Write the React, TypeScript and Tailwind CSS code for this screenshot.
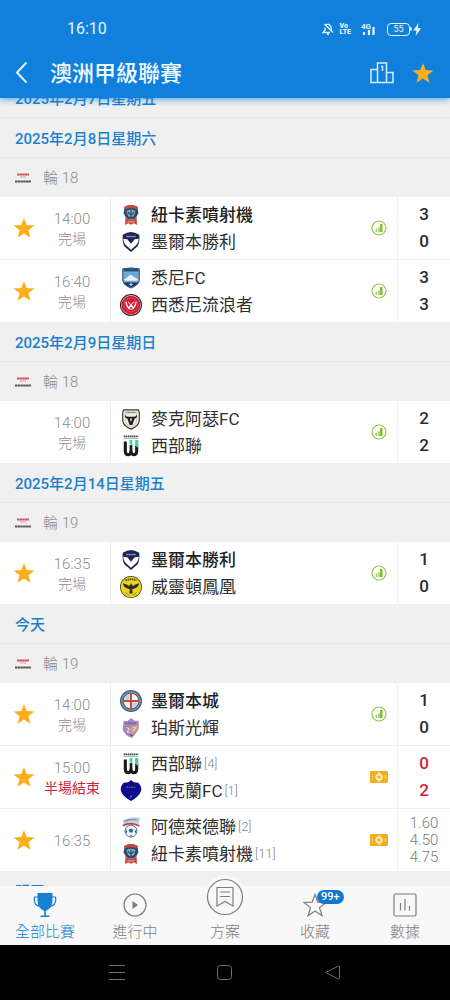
import { useState } from "react";
import type { ReactNode } from "react";

type Crest =
  | "jets" | "victory" | "sydney" | "wanderers" | "macarthur" | "western"
  | "phoenix" | "city" | "glory" | "auckland" | "adelaide";

interface Team {
  name: string;
  crest: Crest;
  rank?: number;
  winner?: boolean;
}

interface Match {
  id: number;
  time: string;
  status?: string;
  live?: boolean;
  starred?: boolean;
  teams: [Team, Team];
  scores?: [number, number];
  odds?: string[];
}

interface Day {
  date: string;
  round: string;
  matches: Match[];
}

const DAYS: Day[] = [
  {
    date: "2025年2月8日星期六",
    round: "輪 18",
    matches: [
      { id: 1, time: "14:00", status: "完場", starred: true, scores: [3, 0],
        teams: [{ name: "紐卡素噴射機", crest: "jets", winner: true }, { name: "墨爾本勝利", crest: "victory" }] },
      { id: 2, time: "16:40", status: "完場", starred: true, scores: [3, 3],
        teams: [{ name: "悉尼FC", crest: "sydney" }, { name: "西悉尼流浪者", crest: "wanderers" }] },
    ],
  },
  {
    date: "2025年2月9日星期日",
    round: "輪 18",
    matches: [
      { id: 3, time: "14:00", status: "完場", scores: [2, 2],
        teams: [{ name: "麥克阿瑟FC", crest: "macarthur" }, { name: "西部聯", crest: "western" }] },
    ],
  },
  {
    date: "2025年2月14日星期五",
    round: "輪 19",
    matches: [
      { id: 4, time: "16:35", status: "完場", starred: true, scores: [1, 0],
        teams: [{ name: "墨爾本勝利", crest: "victory", winner: true }, { name: "威靈頓鳳凰", crest: "phoenix" }] },
    ],
  },
  {
    date: "今天",
    round: "輪 19",
    matches: [
      { id: 5, time: "14:00", status: "完場", starred: true, scores: [1, 0],
        teams: [{ name: "墨爾本城", crest: "city", winner: true }, { name: "珀斯光輝", crest: "glory" }] },
      { id: 6, time: "15:00", status: "半場結束", live: true, starred: true, scores: [0, 2],
        teams: [{ name: "西部聯", crest: "western", rank: 4 }, { name: "奧克蘭FC", crest: "auckland", rank: 1 }] },
      { id: 7, time: "16:35", starred: true, odds: ["1.60", "4.50", "4.75"],
        teams: [{ name: "阿德萊德聯", crest: "adelaide", rank: 2 }, { name: "紐卡素噴射機", crest: "jets", rank: 11 }] },
    ],
  },
];

const CRESTS: Record<Crest, ReactNode> = {
  jets: (
    <>
      <path d="M5 3Q12 -1 19 3L20 10Q18 15 15 17H9Q6 15 4 10Z" fill="#274b70" />
      <path d="M5 3Q12 -1 19 3L19 6Q12 3 5 6Z" fill="#c9473f" />
      <path d="M7 7.500Q12 5 17 7.500L16 11L14.500 14H9.500L8 11Z" fill="#7fa9bd" />
      <path d="M12 7V15M8.500 9L12 12L15.500 9" stroke="#274b70" strokeWidth="1.200" fill="none" />
      <path d="M6 14Q8 18 12 17Q16 18 18 14L18.500 23L15 21L12 22.500L9 21L5.500 23Z" fill="#cc4138" />
      <path d="M8 19.500H16" stroke="#f0b8a8" strokeWidth="1" />
    </>
  ),
  victory: (
    <>
      <path d="M3 4Q8 1 12 1Q16 1 21 4Q22 12 19 17L12 23L5 17Q2 12 3 4Z" fill="#1d2456" />
      <path d="M3.500 8.500L8 9L12 14L16 9L20.500 8.500Q20.500 12 18 15L12 20.500L6 15Q3.500 12 3.500 8.500Z" fill="#fff" />
      <path d="M7 6H17" stroke="#a8aecb" strokeWidth="1.500" strokeDasharray="1.500 .6" />
    </>
  ),
  sydney: (
    <>
      <path d="M3 2Q12 0 21 2V15Q20 20 12 23Q4 20 3 15Z" fill="#6fa8d6" stroke="#1d3f68" strokeWidth="1" />
      <path d="M4 2.500Q12 1 20 2.500V5H4Z" fill="#2a5079" />
      <path d="M4 14Q8 12 10 9Q13 8 15 11Q18 12 20 14L18 15H6Z" fill="#e8f4fc" />
      <path d="M4 17H20Q19 20 12 22Q5 20 4 17Z" fill="#183456" />
      <path d="M12 17L13 18.500L15 18.500L13 19.500L12 21L11 19.500L9 18.500L11 18.500Z" fill="#b9d7ee" />
    </>
  ),
  wanderers: (
    <>
      <circle cx="12" cy="12" r="12" fill="#2b1a1c" />
      <circle cx="12" cy="12" r="10.900" fill="#e9c9cb" />
      <circle cx="12" cy="12" r="10.200" fill="#cf1b32" />
      <circle cx="12" cy="12" r="7.500" fill="none" stroke="#e2606f" strokeWidth=".7" />
      <path d="M6.500 8.500Q7 13 9.500 15.500L12 12L14.500 15.500Q17 13 17.500 8.500" fill="none" stroke="#fff" strokeWidth="1.500" />
      <path d="M9 8.500L12 12L15 8.500M10 16.500H14" fill="none" stroke="#f3c6cb" strokeWidth="1.200" />
    </>
  ),
  macarthur: (
    <>
      <path d="M4 2H20Q21 4 21 6V14Q20 20 12 23Q4 20 3 14V6Q3 4 4 2Z" fill="#fff" stroke="#3a352a" strokeWidth="1.300" />
      <path d="M5.500 4H18.500V14Q18 18 12 21Q6 18 5.500 14Z" fill="#f2eddc" stroke="#b6a676" strokeWidth=".7" />
      <path d="M7 5H17" stroke="#777" strokeWidth="1.200" strokeDasharray="1 .5" />
      <path d="M5.500 7Q6 9.500 9 9.500H15Q18 9.500 18.500 7Q19 11.500 16 11.500L13.500 18.500H10.500L8 11.500Q5 11.500 5.500 7Z" fill="#1f1f1f" />
      <path d="M10.800 11.500L12 15.500L13.200 11.500Z" fill="#f2eddc" />
    </>
  ),
  western: (
    <>
      <path d="M4 1.500H20" stroke="#404746" strokeWidth="2" strokeDasharray="1.700 .5" />
      <path d="M4 3.800H20" stroke="#8db9ac" strokeWidth="1" />
      <path d="M5.800 7V18Q6 21.500 9 21.500Q11 21.500 12 18.500Q13 21.500 15 21.500Q18 21.500 18.200 18V12" fill="none" stroke="#171b1c" strokeWidth="3.400" />
      <path d="M12 11V19" stroke="#171b1c" strokeWidth="3" />
      <path d="M10.500 5.500H13.500V12L10.500 9.500ZM16.500 5.500H20V14.500L16.500 11.500Z" fill="#40cf9f" />
    </>
  ),
  phoenix: (
    <>
      <circle cx="12" cy="12" r="12" fill="#4c4716" />
      <circle cx="12" cy="12" r="11.200" fill="#e7d51d" />
      <path d="M6 5Q12 2 18 5" fill="none" stroke="#59501a" strokeWidth="2" strokeDasharray="1.700 .7" />
      <path d="M3 8Q8 9 10 11L12 8L14 11Q16 9 21 8Q20 13 15 14L13 15L14 18L12 20L10 18L11 15L9 14Q4 13 3 8Z" fill="#352c1d" />
      <path d="M6 18Q8 20 10 21M18 18Q16 20 14 21" stroke="#8d8020" fill="none" />
    </>
  ),
  city: (
    <>
      <circle cx="12" cy="12" r="12" fill="#4b6177" />
      <circle cx="12" cy="12" r="9.800" fill="none" stroke="#8ca3b4" strokeWidth="1.600" strokeDasharray="1.600 .8" />
      <circle cx="12" cy="12" r="8" fill="#f8f4ee" />
      <path d="M5 8A8 8 0 0 1 10.500 4.200V10.500H4.500ZM19 16A8 8 0 0 1 13.500 19.800V13.500H19.500Z" fill="#b9d5e6" />
      <path d="M12 4V20M4 12H20" stroke="#d5433b" strokeWidth="2.200" />
    </>
  ),
  glory: (
    <>
      <path d="M4 4L8 4.500L12 1L16 4L20 4Q22 12 18 17L13 23Q5 20 3 14Z" fill="#a28bbb" />
      <path d="M12 10L20 8.500Q20 14 16 17L13 19.500Q10 16 12 10Z" fill="#d99a78" />
      <path d="M6 7H18" stroke="#7a5f9a" strokeWidth="1.800" strokeDasharray="1.700 .7" />
      <path d="M7 11L10 13L8 16L11 17M14 11L17 12L14 15" fill="none" stroke="#dfd6ec" strokeWidth="1.200" />
      <path d="M11 19.500L14 20.500" stroke="#704e8c" strokeWidth="1.500" />
    </>
  ),
  auckland: (
    <>
      <path d="M12 0L15 2.500L20 3Q24 7 23 12Q21 18 12 23Q3 18 1 12Q0 7 4 3L9 2.500Z" fill="#0d0c8d" />
      <path d="M7 8H17" stroke="#565b61" strokeWidth="1.600" strokeDasharray="2 .6" />
      <path d="M12 17V20M11 18H13" stroke="#77798b" strokeWidth=".9" />
    </>
  ),
  adelaide: (
    <>
      <path d="M3 5Q12 0 22 2L20 11Q12 8 4 12Z" fill="#c3d1df" />
      <path d="M5 6Q12 2.500 19 4.500" stroke="#5f82a6" strokeWidth="1.600" strokeDasharray="1.600 .6" fill="none" />
      <path d="M3 10.500Q12 6 21 11" stroke="#c93d48" strokeWidth="1.800" fill="none" />
      <circle cx="12" cy="16.500" r="6.500" fill="#f1f5f8" stroke="#47698d" strokeWidth="1" />
      <path d="M12 13.500L14.500 15L13.600 18H10.400L9.500 15ZM6 14L8 17L6.500 19.500ZM18 14L16 17L17.500 19.500ZM10.500 21H13.500L12 23Z" fill="#2e6295" />
    </>
  ),
};

function TeamCrest({ crest }: { crest: Crest }) {
  return (
    <svg viewBox="0 0 24 24" className="size-[22px] shrink-0" aria-hidden="true">
      {CRESTS[crest]}
    </svg>
  );
}

function Star({ on }: { on: boolean }) {
  return (
    <svg viewBox="0 0 24 24" className="size-[22px]" aria-hidden="true">
      <path d="M12 1L14.900 8.700L23.500 9.200L16.800 14.400L19.100 22.700L12 18L4.900 22.700L7.200 14.400L.5 9.200L9.100 8.700Z"
        fill={on ? "#fdae1c" : "none"} />
    </svg>
  );
}

function LeagueLogo() {
  return (
    <svg viewBox="0 0 18 10" className="h-[10px] w-[18px]" aria-hidden="true">
      <path d="M3 1.500H15" stroke="#cf4f5c" strokeWidth="2" strokeDasharray="2.400 .2" />
      <path d="M6 4H12" stroke="#e4aab0" strokeWidth="1.200" />
      <path d="M1 8.500H17" stroke="#55565a" strokeWidth="1.900" strokeDasharray="2.400 .3" fill="none" />
    </svg>
  );
}

function StatsIcon() {
  return (
    <svg viewBox="0 0 16 16" className="size-4" aria-hidden="true">
      <circle cx="8" cy="8" r="7" fill="none" stroke="#92c352" strokeWidth="1.200" />
      <path d="M5.500 8.500V12M8 7.500V12" stroke="#a5d568" strokeWidth="1.800" />
      <path d="M10.300 4V12" stroke="#7cbc22" strokeWidth="2.400" />
    </svg>
  );
}

function OddsIcon() {
  return (
    <svg viewBox="0 0 18 12" className="h-3 w-[18px]" aria-hidden="true">
      <rect width="18" height="12" rx="1" fill="#f3ae20" />
      <circle cx="9" cy="6" r="3" fill="#f8cb69" stroke="#fff3d5" strokeWidth="1.200" />
      <path d="M9 1V11" stroke="#fff3d5" strokeWidth="1.200" />
      <path d="M2.500 4.500V7.500M15.500 4.500V7.500" stroke="#f9d48a" strokeWidth="1.200" />
      <circle cx="9" cy="6" r="1.200" fill="#f3ae20" />
    </svg>
  );
}

function StatusBar() {
  return (
    <div className="flex h-12 items-center justify-between pt-2.5 pr-[28px] pl-[67px]">
      <span className="text-base text-[#e3f5ff]">16:10</span>
      <div className="flex items-center text-[#e3f5ff]">
        <svg viewBox="0 0 12 12" className="mr-[6px] size-3" fill="none" stroke="currentColor" strokeWidth="1.400" aria-hidden="true">
          <path d="M2.500 1L11 9.500M4 2.500Q6 0 8 2.500Q9.500 4 9.500 7M3 4.500V7L1 9.500H8M5 11.300H7" />
        </svg>
        <span className="mr-[7px] flex flex-col text-[7px] leading-[6px] font-black">
          <span>Vo</span>
          <span>LTE</span>
        </span>
        <svg viewBox="0 0 20 14" className="mr-[9px] h-[14px] w-[20px]" aria-hidden="true">
          <text x="3" y="6.500" fontSize="8" fontWeight="700" fill="currentColor">4G</text>
          <path d="M6 10V13M11 8V13M15.500 5V13" stroke="currentColor" strokeWidth="2.200" />
        </svg>
        <span className="flex h-[13px] w-[23px] items-center justify-center rounded-[4px] border border-[#e3f5ff] text-[9px] leading-none">55</span>
        <span className="h-1 w-0.5 rounded-r bg-[#e3f5ff]" />
        <svg viewBox="0 0 10 14" className="h-[13px] w-[10px]" aria-hidden="true">
          <path d="M6.500 0L1 8H4.500L3.500 14L9.500 5.500H6Z" fill="currentColor" />
        </svg>
      </div>
    </div>
  );
}

function Header() {
  const [starred, setStarred] = useState(true);
  return (
    <header className="relative z-10 bg-[#1080dc] shadow-[0_2px_6px_#1080dc99]">
      <StatusBar />
      <div className="flex h-[50px] items-center pr-[16px] pl-[10px]">
        <button aria-label="返回" className="flex size-6 items-center justify-center">
          <svg viewBox="0 0 24 24" className="size-6" fill="none" stroke="#e3f5ff" strokeWidth="2" aria-hidden="true">
            <path d="M16.500 1.500L7 11.500L16.500 21.500" />
          </svg>
        </button>
        <h1 className="ml-4 flex-1 pt-0.5 text-[22px] leading-7 font-medium text-[#ecf9ff]">澳洲甲級聯賽</h1>
        <button aria-label="積分榜" className="mr-[17px]">
          <svg viewBox="0 0 26 24" className="h-6 w-[26px]" fill="none" stroke="#d4f0ff" strokeWidth="1.500" aria-hidden="true">
            <path d="M8.500 21.500V2H17.500V21.500M8.500 8.500H2V21.500H24V11.500H17.500M12 5.500H13.500V10" />
          </svg>
        </button>
        <button aria-label="收藏聯賽" aria-pressed={starred} onClick={() => setStarred(!starred)}>
          <Star on={starred} />
        </button>
      </div>
    </header>
  );
}

function DateRow({ date }: { date: string }) {
  return (
    <h2 className="flex h-10 items-center border-b border-[#e9e9e9] px-[15px] pt-1 text-[15px] font-medium text-[#1b80cc]">
      {date}
    </h2>
  );
}

function MatchRow({ match }: { match: Match }) {
  const [starred, setStarred] = useState(!!match.starred);
  return (
    <li className="flex items-stretch bg-white">
      <button aria-label="收藏" aria-pressed={starred} onClick={() => setStarred(!starred)}
        className="flex w-12 items-center justify-center">
        <Star on={starred} />
      </button>
      <div className="flex w-[63px] flex-col items-center justify-center border-r border-[#eeeeee] pt-0.5 pr-[14px] leading-5 whitespace-nowrap text-[#8c8c8c]">
        <time className="text-[15px] font-light">{match.time}</time>
        {match.status && (
          <span className={match.live ? "text-sm text-[#cf2343]" : "text-sm font-light"}>{match.status}</span>
        )}
      </div>
      <div className="min-w-0 flex-1 py-1 pl-[9px]">
        {match.teams.map((team) => (
          <div key={team.name} className="flex h-[27px] items-center">
            <TeamCrest crest={team.crest} />
            <span className={team.winner ? "ml-[9px] pt-0.5 text-[17px] font-medium text-[#222222]" : "ml-[9px] pt-0.5 text-[17px] text-[#2f2f2f]"}>
              {team.name}
            </span>
            {team.rank && <span className="ml-0.5 text-[13px] font-light text-[#858585]">[{team.rank}]</span>}
          </div>
        ))}
      </div>
      <div className="flex w-9 items-center justify-center">
        {match.live || match.odds ? <OddsIcon /> : <StatsIcon />}
      </div>
      <div className="flex w-[53px] flex-col items-center justify-center border-l border-[#f1f1f1]">
        {match.scores?.map((s, i) => (
          <span key={i} className={match.live
            ? "text-[17px] leading-[27px] font-medium text-[#cf2343]"
            : "text-[17px] leading-[27px] font-medium text-[#2b2b2b]"}>
            {s}
          </span>
        ))}
        {match.odds?.map((o) => (
          <span key={o} className="text-[15px] leading-[17px] font-light text-[#7d7d7d]">{o}</span>
        ))}
      </div>
    </li>
  );
}

function DaySection({ day }: { day: Day }) {
  return (
    <section>
      <DateRow date={day.date} />
      <div className="flex h-[39px] items-center px-[14px] text-[15px] font-light text-[#8c8c8c]">
        <LeagueLogo />
        <span className="ml-[11px] pt-0.5">{day.round}</span>
      </div>
      <ul className="divide-y divide-[#f0f0f0]">
        {day.matches.map((m) => <MatchRow key={m.id} match={m} />)}
      </ul>
    </section>
  );
}

const TABS: { label: string; icon: ReactNode }[] = [
  {
    label: "全部比賽",
    icon: (
      <svg viewBox="0 0 24 24" className="size-6" aria-hidden="true">
        <path d="M4.500 0H19.500V8Q19.500 15 12.800 18V22.500H16.500V24H7.500V22.500H11.200V18Q4.500 15 4.500 8Z" fill="currentColor" />
        <path d="M5 4H1.500Q0 12 7 13.500M19 4H22.500Q24 12 17 13.500" fill="none" stroke="currentColor" strokeWidth="1.200" />
      </svg>
    ),
  },
  {
    label: "進行中",
    icon: (
      <svg viewBox="0 0 24 24" className="size-6" aria-hidden="true">
        <circle cx="12" cy="12" r="11" fill="none" stroke="currentColor" strokeWidth="1.200" />
        <path d="M9.500 8L15 12L9.500 16Z" fill="currentColor" />
      </svg>
    ),
  },
  {
    label: "方案",
    icon: (
      <span className="absolute bottom-[-2px] left-1/2 flex size-11 -translate-x-1/2 items-center justify-center rounded-full bg-[#f8f8f8]">
        <svg viewBox="0 0 38 38" className="size-[38px]" fill="none" stroke="currentColor" strokeWidth="1.200" aria-hidden="true">
          <circle cx="19" cy="19" r="17.500" />
          <path d="M11 9.500H27V28L19 23.500L11 28ZM14 14H24M14 18.500H24" />
        </svg>
      </span>
    ),
  },
  {
    label: "收藏",
    icon: (
      <>
        <svg viewBox="0 0 24 24" className="size-6" aria-hidden="true">
          <path d="M12 1.500L14.800 9.200L23 9.500L16.500 14.600L19 22.700L12 18L5 22.700L7.500 14.600L1 9.500L9.200 9.200Z"
            fill="none" stroke="currentColor" strokeWidth="1.200" />
        </svg>
        <span className="absolute -top-[3px] left-[14px] rounded-full bg-[#1378cc] px-1 text-[11px] leading-[14px] font-medium text-white">
          99+
        </span>
      </>
    ),
  },
  {
    label: "數據",
    icon: (
      <svg viewBox="0 0 24 24" className="size-6" fill="none" stroke="currentColor" strokeWidth="1.200" aria-hidden="true">
        <rect x="1" y="1" width="22" height="22" rx="1.500" />
        <path d="M7.500 10V17.500M12 6V17.500M16.500 13V17.500" />
      </svg>
    ),
  },
];

function TabBar() {
  const [active, setActive] = useState(0);
  return (
    <nav className="relative z-10 grid grid-cols-5 bg-[#f8f8f8]">
      {TABS.map((tab, i) => (
        <button key={tab.label} onClick={() => setActive(i)}
          className={i === active
            ? "flex flex-col items-center gap-1 pt-[7px] pb-0.5 text-[#1580d4]"
            : "flex flex-col items-center gap-1 pt-[7px] pb-0.5 text-[#7d7d7d]"}>
          <span className="relative size-6">{tab.icon}</span>
          <span className="text-[15px] leading-[22px] font-light">{tab.label}</span>
        </button>
      ))}
    </nav>
  );
}

function SystemNav() {
  return (
    <div className="flex h-[55px] items-center justify-center gap-[86px] bg-black text-[#6f6f6f]">
      <button aria-label="最近">
        <svg viewBox="0 0 22 22" className="size-[22px]" fill="none" stroke="currentColor" aria-hidden="true">
          <path d="M3 3.500H19M3 10.500H19M3 17.500H19" />
        </svg>
      </button>
      <button aria-label="主畫面">
        <svg viewBox="0 0 22 22" className="size-[22px]" fill="none" stroke="currentColor" aria-hidden="true">
          <rect x="3.500" y="3.500" width="14" height="14" rx="3" />
        </svg>
      </button>
      <button aria-label="上一頁">
        <svg viewBox="0 0 22 22" className="size-[22px]" fill="none" stroke="currentColor" aria-hidden="true">
          <path d="M17.500 4.500Q17.500 3.500 16.500 4L4.500 10Q3.500 10.500 4.500 11L16.500 17Q17.500 17.500 17.500 16.500Z" />
        </svg>
      </button>
    </div>
  );
}

export default function App() {
  return (
    <div className="flex h-screen flex-col bg-[#f0f0f0] font-[Roboto,'Noto_Sans_CJK_TC',sans-serif]">
      <Header />
      <main className="min-h-0 flex-1 overflow-hidden">
        {/* list is scrolled part way past the previous day */}
        <div className="-mt-5">
          <DateRow date="2025年2月7日星期五" />
          {DAYS.map((d) => <DaySection key={d.date} day={d} />)}
          <DateRow date="明天" />
        </div>
      </main>
      <TabBar />
      <SystemNav />
    </div>
  );
}
